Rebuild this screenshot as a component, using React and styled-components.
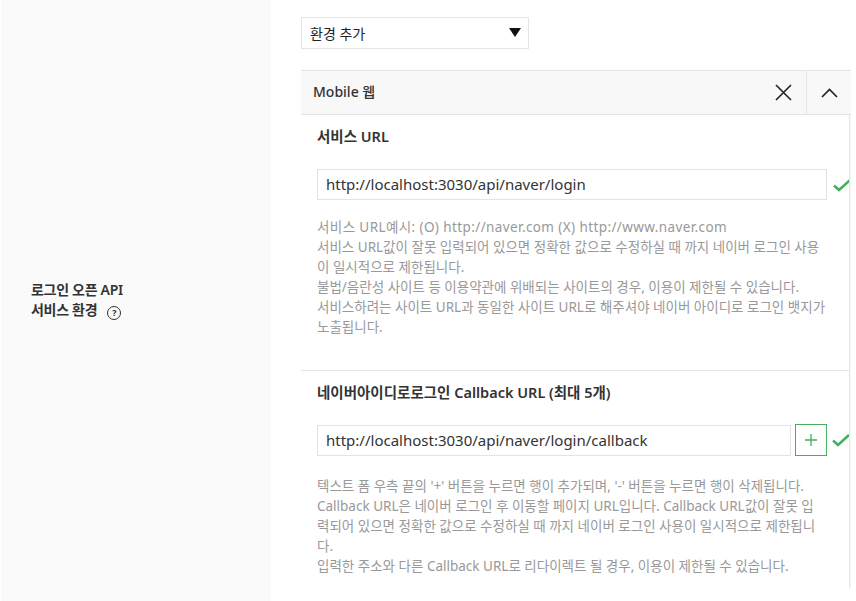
import React from 'react';
import styled, { createGlobalStyle } from 'styled-components';

const GlobalStyle = createGlobalStyle`
  html, body {
    margin: 0;
    padding: 0;
    background: #fff;
  }
  body {
    font-family: "Noto Sans", "Noto Sans CJK KR", sans-serif;
    color: #333;
  }
`;

const Page = styled.div`
  display: flex;
  width: 856px;
  height: 601px;
  overflow: hidden;
`;

const Side = styled.div`
  width: 270px;
  flex-shrink: 0;
  margin-left: 1px;
  background: #fafafa;
  display: flex;
  align-items: center;
  padding-left: 30px;
  box-sizing: border-box;
`;

const SideLabel = styled.div`
  font-size: 14px;
  line-height: 20px;
  font-weight: 600;
  color: #333;
  letter-spacing: -0.3px;
  margin-top: -1px;
`;

const Help = styled.span`
  display: inline-flex;
  align-items: center;
  justify-content: center;
  width: 12px;
  height: 12px;
  border: 1.5px solid #333;
  border-radius: 50%;
  font-size: 9px;
  line-height: 1;
  font-weight: 700;
  margin-left: 10px;
  vertical-align: -1px;
`;

const Main = styled.div`
  flex: 1;
  padding: 17px 0 0 30px;
  display: flex;
  flex-direction: column;
  align-items: flex-start;
`;

const Select = styled.div`
  width: 228px;
  height: 32px;
  box-sizing: border-box;
  border: 1px solid #e5e5e5;
  display: flex;
  align-items: center;
  justify-content: space-between;
  padding: 0 7px 1px 8px;
  font-size: 14px;
  color: #222;
`;

const Arrow = styled.span`
  width: 0;
  height: 0;
  border-left: 6px solid transparent;
  border-right: 6px solid transparent;
  border-top: 9px solid #111;
`;

const Panel = styled.div`
  margin-top: 21px;
  width: 550px;
`;

const PanelHead = styled.div`
  height: 45px;
  box-sizing: border-box;
  border-top: 1px solid #e5e5e5;
  border-bottom: 1px solid #e5e5e5;
  background: #f8f8f8;
  display: flex;
  align-items: center;
`;

const PanelTitle = styled.div`
  flex: 1;
  padding: 0 0 3px 12px;
  font-size: 14px;
  font-weight: 500;
  color: #333;
`;

const HeadButton = styled.div`
  width: 45px;
  height: 100%;
  display: flex;
  align-items: center;
  justify-content: center;
  border-left: ${(p) => (p.divided ? '1px solid #e5e5e5' : 'none')};
  box-sizing: border-box;
`;

const PanelBody = styled.div`
  width: 548px;
  border-right: 1px solid #e5e5e5;
  box-shadow: 1px 0 2px rgba(0, 0, 0, 0.04);
  overflow: hidden;
`;

const Section = styled.div`
  padding: ${(p) => p.pad};
  border-top: ${(p) => (p.ruled ? '1px solid #e5e5e5' : 'none')};
`;

const FieldLabel = styled.div`
  padding-left: 16px;
  font-size: 14.5px;
  line-height: 20px;
  font-weight: 600;
  color: #333;
  white-space: nowrap;
`;

const InputRow = styled.div`
  display: flex;
  align-items: center;
  padding-left: 16px;
  margin-top: ${(p) => p.gap}px;
  gap: 4px;
  & > * {
    flex-shrink: 0;
  }
`;

const Input = styled.div`
  width: ${(p) => p.w}px;
  height: 31px;
  box-sizing: border-box;
  border: 1px solid #e3e3e3;
  display: flex;
  align-items: center;
  padding: 0 0 1px 8px;
  font-size: 15px;
  color: #333;
  white-space: nowrap;
`;

const PlusButton = styled.div`
  width: 32px;
  height: 32px;
  box-sizing: border-box;
  border: 1px solid #45b05e;
  display: flex;
  align-items: center;
  justify-content: center;
`;

const Check = styled.span`
  margin-left: ${(p) => p.ml}px;
  display: flex;
`;

const Note = styled.div`
  padding-left: 16px;
  margin-top: ${(p) => p.gap}px;
  font-size: 13.5px;
  line-height: 20px;
  color: #999;
  white-space: nowrap;
`;

const Line = styled.div`
  letter-spacing: ${(p) => p.spread || 0}px;
`;

const CheckIcon = () => (
  <svg width="20" height="16" viewBox="0 0 20 16">
    <path d="M2 8.5 L7 13 L18 3" fill="none" stroke="#45b05e" strokeWidth="2.6" />
  </svg>
);

const App = () => (
  <>
    <GlobalStyle />
    <Page>
      <Side>
        <SideLabel>
          로그인 오픈 API
          <br />
          서비스 환경
          <Help>?</Help>
        </SideLabel>
      </Side>
      <Main>
        <Select>
          환경 추가
          <Arrow />
        </Select>
        <Panel>
          <PanelHead>
            <PanelTitle>Mobile 웹</PanelTitle>
            <HeadButton>
              <svg width="17" height="17" viewBox="0 0 17 17">
                <path d="M1 1 L16 16 M16 1 L1 16" stroke="#222" strokeWidth="1.6" />
              </svg>
            </HeadButton>
            <HeadButton divided>
              <svg width="17" height="10" viewBox="0 0 17 10">
                <path d="M1 9 L8.5 1.5 L16 9" fill="none" stroke="#222" strokeWidth="1.6" />
              </svg>
            </HeadButton>
          </PanelHead>
          <PanelBody>
            <Section pad="11px 0 33px 0">
              <FieldLabel>서비스 URL</FieldLabel>
              <InputRow gap={23}>
                <Input w={510}>http://localhost:3030/api/naver/login</Input>
                <Check ml={1}>
                  <CheckIcon />
                </Check>
              </InputRow>
              <Note gap={17}>
                <Line spread={0.4}>서비스 URL예시: (O) http://naver.com (X) http://www.naver.com</Line>
                <Line>서비스 URL값이 잘못 입력되어 있으면 정확한 값으로 수정하실 때 까지 네이버 로그인 사용</Line>
                <Line>이 일시적으로 제한됩니다.</Line>
                <Line>불법/음란성 사이트 등 이용약관에 위배되는 사이트의 경우, 이용이 제한될 수 있습니다.</Line>
                <Line>서비스하려는 사이트 URL과 동일한 사이트 URL로 해주셔야 네이버 아이디로 로그인 뱃지가</Line>
                <Line>노출됩니다.</Line>
              </Note>
            </Section>
            <Section ruled pad="11px 0 12px 0">
              <FieldLabel>네이버아이디로로그인 Callback URL (최대 5개)</FieldLabel>
              <InputRow gap={22}>
                <Input w={474}>http://localhost:3030/api/naver/login/callback</Input>
                <PlusButton>
                  <svg width="14" height="14" viewBox="0 0 14 14">
                    <path d="M7 1 V13 M1 7 H13" stroke="#45b05e" strokeWidth="1.3" />
                  </svg>
                </PlusButton>
                <Check ml={0}>
                  <CheckIcon />
                </Check>
              </InputRow>
              <Note gap={20}>
                <Line>텍스트 폼 우측 끝의 '+' 버튼을 누르면 행이 추가되며, '-' 버튼을 누르면 행이 삭제됩니다.</Line>
                <Line>Callback URL은 네이버 로그인 후 이동할 페이지 URL입니다. Callback URL값이 잘못 입</Line>
                <Line>력되어 있으면 정확한 값으로 수정하실 때 까지 네이버 로그인 사용이 일시적으로 제한됩니</Line>
                <Line>다.</Line>
                <Line>입력한 주소와 다른 Callback URL로 리다이렉트 될 경우, 이용이 제한될 수 있습니다.</Line>
              </Note>
            </Section>
          </PanelBody>
        </Panel>
      </Main>
    </Page>
  </>
);

export default App;
